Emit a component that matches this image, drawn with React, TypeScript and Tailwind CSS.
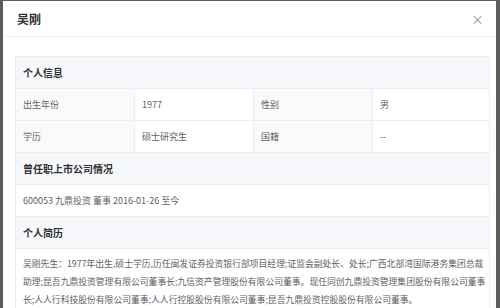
const font = { fontFamily: '"Noto Sans CJK SC", "Noto Sans", sans-serif' };

const Section = ({ title }: { title: string }) => (
  <div className="flex h-[32px] items-center border-b border-[#ebeef5] bg-[#f5f7fa] px-[7px] text-[10px] font-bold text-[#303133]">
    {title}
  </div>
);

const Row = ({ cells }: { cells: string[] }) => (
  <div className="flex h-[32px] border-b border-[#ebeef5] text-[9px] text-[#606266]">
    {cells.map((c, i) => (
      <div
        key={i}
        className={
          'flex w-[119px] items-center px-[7px] ' +
          (i % 2 === 0 ? 'bg-[#fafafa] ' : 'bg-white ') +
          (i < 3 ? 'border-r border-[#ebeef5]' : 'flex-1')
        }
      >
        {c}
      </div>
    ))}
  </div>
);

const resume = [
  '吴刚先生：1977年出生,硕士学历,历任闽发证券投资银行部项目经理;证监会副处长、处长;广西北部湾国际港务集团总裁',
  '助理;昆吾九鼎投资管理有限公司董事长;九信资产管理股份有限公司董事。现任同创九鼎投资管理集团股份有限公司董事',
  '长;人人行科技股份有限公司董事;人人行控股股份有限公司董事;昆吾九鼎投资控股股份有限公司董事。',
];

export default function App() {
  return (
    <div className="h-[308px] w-[500px] overflow-hidden bg-[#5c5c5c] pl-[3px] pr-[4px] pt-[1px]" style={font}>
      <div className="h-full bg-white">
        <div className="flex h-[36px] items-center justify-between border-b border-[#f0f0f0] pl-[14px] pr-[12px]">
          <span className="text-[12px] font-bold text-[#303133]">吴刚</span>
          <span className="text-[13px] leading-none text-[#909399]">×</span>
        </div>
        <div className="pl-[12px] pr-[6px] pt-[19px]">
          <div className="border border-[#ebeef5]">
            <Section title="个人信息" />
            <Row cells={['出生年份', '1977', '性别', '男']} />
            <Row cells={['学历', '硕士研究生', '国籍', '--']} />
            <Section title="曾任职上市公司情况" />
            <div className="flex h-[32px] items-center border-b border-[#ebeef5] px-[7px] text-[9px] text-[#606266]">
              600053 九鼎投资 董事 2016-01-26 至今
            </div>
            <Section title="个人简历" />
            <div className="overflow-hidden px-[7px] pt-[6px] text-[8.8px] leading-[18px] text-[#606266]">
              {resume.map((line) => (
                <div key={line} className="whitespace-nowrap">
                  {line}
                </div>
              ))}
            </div>
          </div>
        </div>
      </div>
    </div>
  );
}
